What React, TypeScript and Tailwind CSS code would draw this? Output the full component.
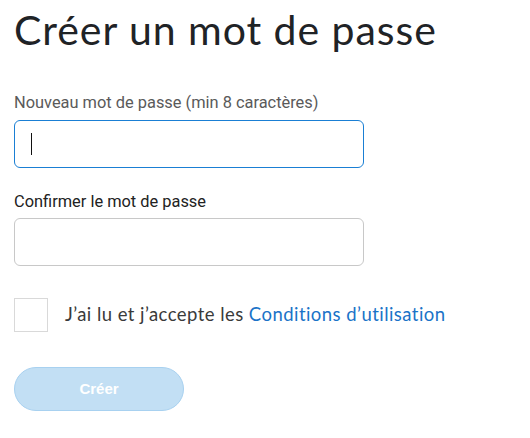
import { useState } from 'react';

export default function App() {
  const [accepted, setAccepted] = useState(false);

  return (
    <div className="min-h-screen bg-white px-[14px] pt-[6px] font-['Roboto',sans-serif]">
      <h1 className="font-['Lato',sans-serif] text-[41px] leading-[48px] font-normal text-[#1f2326] tracking-[0.95px]">
        Créer un mot de passe
      </h1>

      <form className="mt-[39px] w-[350px]" onSubmit={(e) => e.preventDefault()}>
        <label className="block">
          <span className="block text-[16.4px] leading-[20px] text-[#5a5a5a]">
            Nouveau mot de passe (min 8 caractères)
          </span>
          <span className="relative mt-[7px] block">
            <input
              type="password"
              autoFocus
              className="block h-[48px] w-[350px] rounded-[6px] border border-[#1a7fd4] px-[16px] text-[16px] outline-none caret-transparent"
            />
            {/* text cursor of the focused field */}
            <span className="pointer-events-none absolute left-[17px] top-[13px] h-[22px] w-px bg-[#111]" />
          </span>
        </label>

        <label className="mt-[24px] block">
          <span className="block text-[16.4px] leading-[20px] text-[#222]">Confirmer le mot de passe</span>
          <input
            type="password"
            className="mt-[6px] block h-[48px] w-[350px] rounded-[6px] border border-[#c8c8c8] px-[16px] text-[16px] outline-none"
          />
        </label>

        <label className="mt-[32px] flex items-center gap-[17px] whitespace-nowrap">
          <input
            type="checkbox"
            checked={accepted}
            onChange={(e) => setAccepted(e.target.checked)}
            className="h-[34px] w-[34px] shrink-0 appearance-none border border-[#d9d9d9] bg-white"
          />
          <span className="font-['Lato',sans-serif] text-[18.5px] tracking-[0.45px] text-[#3a3a3a]">
            J’ai lu et j’accepte les <a className="text-[#1a73c8]">Conditions d’utilisation</a>
          </span>
        </label>

        <button
          type="submit"
          disabled={!accepted}
          className="mt-[35px] block h-[44px] w-[170px] rounded-full border border-[#a8d1f0] bg-[#c2dff4] font-['Liberation_Sans',sans-serif] text-[15px] font-bold text-white"
        >
          Créer
        </button>
      </form>
    </div>
  );
}
